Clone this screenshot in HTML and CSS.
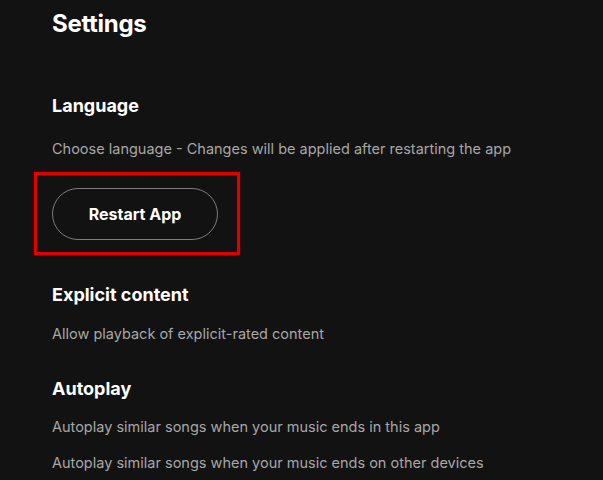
FILE: index.html
```html
<!DOCTYPE html>
<html lang="en">
<head>
<meta charset="utf-8">
<title>Settings</title>
<link rel="stylesheet" href="styles.css">
</head>
<body>
<main class="settings">
  <h1 class="page-title">Settings</h1>

  <section class="group group-language">
    <h2 class="group-title">Language</h2>
    <p class="desc">Choose language - Changes will be applied after restarting the app</p>
    <div class="highlight">
      <button class="pill-btn" type="button">Restart App</button>
    </div>
  </section>

  <section class="group group-explicit">
    <h2 class="group-title">Explicit content</h2>
    <p class="desc desc-tight">Allow playback of explicit-rated content</p>
  </section>

  <section class="group group-autoplay">
    <h2 class="group-title">Autoplay</h2>
    <p class="desc desc-auto">Autoplay similar songs when your music ends in this app</p>
    <p class="desc desc-next">Autoplay similar songs when your music ends on other devices</p>
  </section>
</main>
</body>
</html>
```

FILE: styles.css
```css
html, body {
  margin: 0;
  padding: 0;
  background: #121212;
  height: 100%;
  overflow: hidden;
}

body {
  font-family: Inter, "Noto Sans", "Liberation Sans", sans-serif;
  color: #ffffff;
}

.settings {
  padding: 8px 0 0 52px;
}

.page-title {
  margin: 0;
  font-size: 24px;
  line-height: 32px;
  font-weight: 700;
  letter-spacing: -0.3px;
}

.group-title {
  margin: 0;
  font-size: 18px;
  line-height: 24px;
  font-weight: 700;
}

.desc {
  margin: 0;
  font-size: 14.5px;
  line-height: 20px;
  font-weight: 400;
  color: #a7a7a7;
}

.group-language {
  margin-top: 54px;
}

.group-language .desc {
  margin-top: 21px;
}

.highlight {
  position: relative;
  margin-top: 29px;
  width: 166px;
}

.highlight::before {
  content: "";
  position: absolute;
  left: -18px;
  top: -16px;
  right: -22px;
  bottom: -15px;
  border: 3px solid #e00000;
  box-shadow: 0 0 2px rgba(230, 0, 0, 0.6);
  pointer-events: none;
}

.pill-btn {
  display: block;
  width: 166px;
  height: 52px;
  margin: 0;
  padding: 0;
  border: 1px solid #7c7c7c;
  border-radius: 26px;
  background: transparent;
  color: #ffffff;
  font-family: Inter, "Noto Sans", "Liberation Sans", sans-serif;
  font-size: 16px;
  font-weight: 700;
  line-height: 20px;
}

.group-explicit {
  margin-top: 43px;
}

.desc-tight {
  margin-top: 17px;
}

.group-autoplay {
  margin-top: 33px;
}

.desc-auto {
  margin-top: 16px;
}

.desc-next {
  margin-top: 16px;
}
```
